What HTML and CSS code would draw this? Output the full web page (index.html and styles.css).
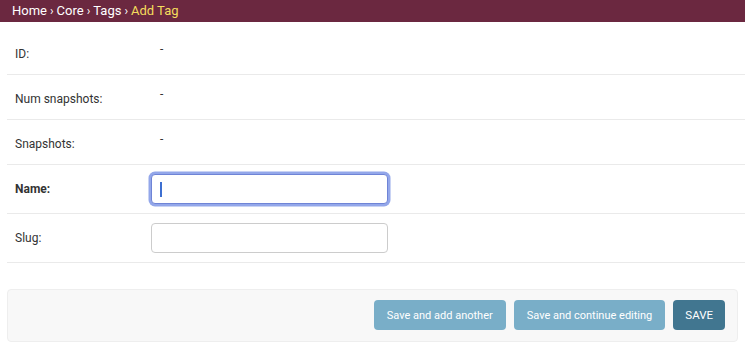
FILE: index.html
```html
<!DOCTYPE html>
<html lang="en">
<head>
<meta charset="utf-8">
<title>Add Tag</title>
<link rel="stylesheet" href="styles.css">
</head>
<body>
<nav class="breadcrumbs">
  <a href="#">Home</a><span class="sep">›</span><a href="#">Core</a><span class="sep">›</span><a href="#">Tags</a><span class="sep">›</span><span class="current">Add Tag</span>
</nav>
<main class="content">
  <form class="tag-form">
    <fieldset class="module">
      <div class="form-row">
        <label class="field-label">ID:</label>
        <div class="readonly">-</div>
      </div>
      <div class="form-row">
        <label class="field-label">Num snapshots:</label>
        <div class="readonly">-</div>
      </div>
      <div class="form-row">
        <label class="field-label">Snapshots:</label>
        <div class="readonly">-</div>
      </div>
      <div class="form-row">
        <label class="field-label required" for="id_name">Name:</label>
        <div class="input-wrap">
          <input class="text-input focused" type="text" id="id_name" name="name">
          <span class="caret"></span>
        </div>
      </div>
      <div class="form-row">
        <label class="field-label" for="id_slug">Slug:</label>
        <div class="input-wrap">
          <input class="text-input" type="text" id="id_slug" name="slug">
        </div>
      </div>
    </fieldset>
    <div class="submit-row">
      <button type="button" class="btn">Save and add another</button>
      <button type="button" class="btn">Save and continue editing</button>
      <button type="button" class="btn btn-default">SAVE</button>
    </div>
  </form>
</main>
</body>
</html>
```
FILE: styles.css
```css
* { box-sizing: border-box; }
html, body { margin: 0; padding: 0; background: #fff; }
body {
  font-family: Roboto, "Liberation Sans", Arial, sans-serif;
  font-size: 12px;
  color: #333;
  width: 745px;
  overflow: hidden;
}
.breadcrumbs {
  height: 22px;
  background: #6b2840;
  color: #fff;
  font-size: 13px;
  line-height: 22px;
  padding: 0 12px;
  display: flex;
  align-items: center;
}
.breadcrumbs a { color: #fff; text-decoration: none; }
.breadcrumbs .sep { color: #fff; padding: 0 3px; font-size: 12px; }
.breadcrumbs .current { color: #f5dd5d; }
.content { padding: 8px 0 0 7px; }
.tag-form { margin: 0; }
.module { border: none; margin: 0; padding: 0; }
.form-row {
  display: flex;
  align-items: flex-start;
  padding: 9px 0 9px 8px;
  border-bottom: 1px solid #eaeaea;
  min-height: 45px;
}
.field-label {
  width: 136px;
  flex: none;
  padding-top: 8px;
  line-height: 15px;
  font-size: 12px;
  color: #333;
}
.field-label.required { font-weight: bold; }
.readonly {
  padding: 3px 0 0 9px;
  line-height: 15px;
  font-size: 12px;
  color: #333;
}
.input-wrap { position: relative; }
.text-input {
  display: block;
  width: 237px;
  height: 30px;
  border: 1px solid #ccc;
  border-radius: 4px;
  padding: 2px 8px;
  font: inherit;
  background: #fff;
  outline: none;
}
.text-input.focused {
  border-color: #6f84d6;
  box-shadow: 0 0 0 2.5px #93a7ea;
}
.caret {
  position: absolute;
  left: 9px;
  top: 8px;
  width: 2px;
  height: 15px;
  background: #3d6fd1;
}
.submit-row {
  margin: 26px 7px 0 0;
  padding: 10px 12px 11px;
  background: #f8f8f8;
  border: 1px solid #eee;
  border-radius: 4px;
  display: flex;
  justify-content: flex-end;
  gap: 7px;
}
.btn {
  height: 30px;
  padding: 0 13px;
  border: none;
  border-radius: 4px;
  background: #79aec8;
  color: #fff;
  font-family: Roboto, "Liberation Sans", Arial, sans-serif;
  font-size: 11px;
  cursor: pointer;
}
.btn + .btn { margin-left: 1px; }
.btn-default { background: #417690; font-size: 11.5px; padding: 0 12px; }
```
